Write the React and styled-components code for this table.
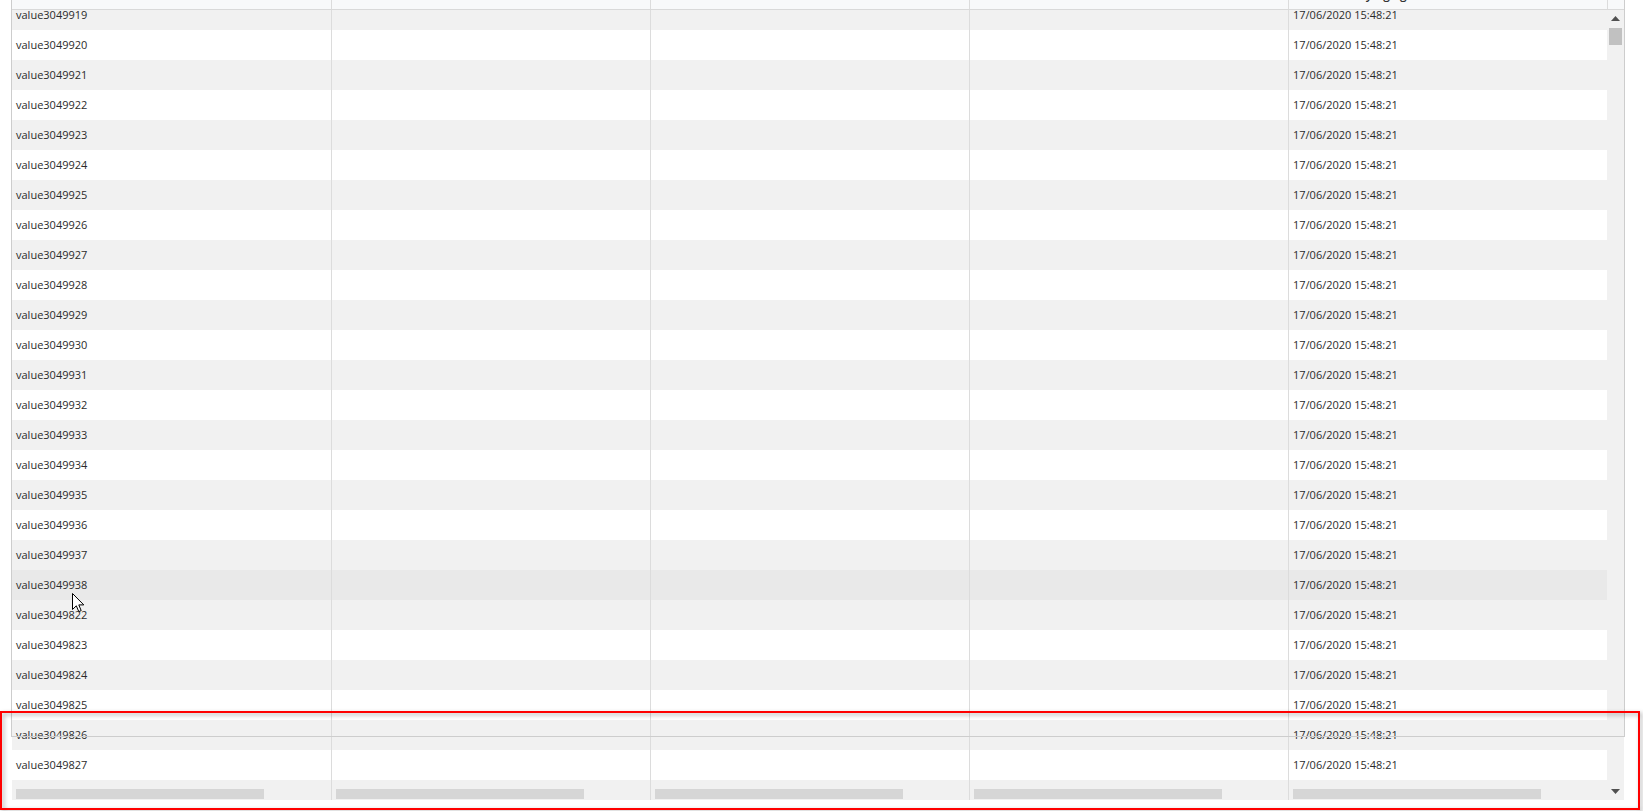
import styled, { createGlobalStyle } from 'styled-components'

const GlobalStyle = createGlobalStyle`
    html, body {
        margin: 0;
        padding: 0;
        background: #ffffff;
        overflow: hidden;
    }
    body {
        font-family: "Open Sans", "Noto Sans", Arial, sans-serif;
    }
`

const COLS = '320px 319px 319px 319px 318px'

// rows as they sit in the grid (the second block got appended after the hovered one)
const rows = [
    ...Array.from({ length: 20 }, (_, i) => `value${3049919 + i}`),
    ...Array.from({ length: 6 }, (_, i) => `value${3049822 + i}`),
]
const HOVERED = 'value3049938'
const STAMP = '17/06/2020 15:48:21'

function App() {
    return (
        <Page>
            <GlobalStyle />
            <Frame>
                <Header>
                    <HeadCell />
                    <HeadCell />
                    <HeadCell />
                    <HeadCell />
                    <HeadCell>Latest modifying agent</HeadCell>
                    <HeadCell />
                </Header>
                <Body>
                    <RowList>
                        {rows.map((name, i) => (
                            <Row key={name} $striped={i % 2 === 0} $hover={name === HOVERED}>
                                <Cell>{name}</Cell>
                                <Cell />
                                <Cell />
                                <Cell />
                                <Cell $last>{STAMP}</Cell>
                            </Row>
                        ))}
                        <Row $striped>
                            {[0, 1, 2, 3, 4].map(c => (
                                <Cell key={c} $last={c === 4}>
                                    <Skeleton />
                                </Cell>
                            ))}
                        </Row>
                    </RowList>
                    <Scrollbar>
                        <ArrowButton>
                            <svg width="9" height="5" viewBox="0 0 9 5">
                                <polygon points="0,5 9,5 4.5,0" fill="#505050" />
                            </svg>
                        </ArrowButton>
                        <Thumb />
                        <Track />
                        <ArrowButton>
                            <svg width="9" height="5" viewBox="0 0 9 5">
                                <polygon points="0,0 9,0 4.5,5" fill="#505050" />
                            </svg>
                        </ArrowButton>
                    </Scrollbar>
                </Body>
            </Frame>
            <Cursor width="13" height="20" viewBox="0 0 13 20">
                <path d="M0.5 0.5 L0.5 16.5 L4.3 12.8 L6.8 18.6 L9.2 17.6 L6.8 11.9 L11.8 11.9 Z" fill="#ffffff" stroke="#000000" strokeWidth="1" strokeLinejoin="miter" />
            </Cursor>
            <Highlight />
        </Page>
    )
}

export default App

const Page = styled.div`
    position: relative;
    width: 1643px;
    height: 811px;
    overflow: hidden;
    background: #ffffff;
`

const Frame = styled.div`
    position: relative;
    display: flex;
    flex-direction: column;
    margin-left: 11px;
    width: 1614px;
    padding: 0 1px;
    box-sizing: border-box;

    &::after {
        content: '';
        position: absolute;
        left: 0;
        right: 0;
        top: -1px;
        height: 738px;
        box-sizing: border-box;
        border: 1px solid #cdcdcd;
        pointer-events: none;
        z-index: 3;
    }
`

const Header = styled.div`
    position: relative;
    z-index: 1;
    display: grid;
    grid-template-columns: 320px 319px 319px 319px 319px 16px;
    height: 33px;
    margin-top: -23px;
    box-sizing: border-box;
    background: #f8f9fa;
    border-bottom: 1px solid #d9d9d9;
`

const HeadCell = styled.div`
    box-sizing: border-box;
    padding: 10px 0 0 4px;
    font-size: 12px;
    line-height: 16px;
    font-weight: 600;
    color: #333333;
    white-space: nowrap;
    overflow: hidden;
    border-right: 1px solid #dcdcdc;

    &:last-child {
        border-right: none;
    }
`

const Body = styled.div`
    display: flex;
    height: 800px;
    margin-top: -10px;
    overflow: hidden;
`

const RowList = styled.div`
    display: flex;
    flex-direction: column;
    width: 1595px;
`

const Row = styled.div`
    display: grid;
    grid-template-columns: ${COLS};
    height: 30px;
    flex-shrink: 0;
    background: ${p => (p.$hover ? '#e9e9e9' : p.$striped ? '#f1f1f1' : '#ffffff')};
`

const Cell = styled.div`
    box-sizing: border-box;
    padding-left: 4px;
    font-size: 11px;
    line-height: 30px;
    color: #2b2b2b;
    white-space: nowrap;
    overflow: hidden;
    border-right: ${p => (p.$last ? 'none' : '1px solid #dcdcdc')};
`

const Skeleton = styled.div`
    width: 248px;
    height: 10px;
    margin-top: 9px;
    background: #d6d6d6;
`

const Scrollbar = styled.div`
    display: flex;
    flex-direction: column;
    width: 17px;
    padding-top: 10px;
    box-sizing: border-box;
    background: #f1f1f1;
`

const ArrowButton = styled.div`
    display: flex;
    align-items: center;
    justify-content: center;
    height: 17px;
    flex-shrink: 0;
`

const Thumb = styled.div`
    height: 17px;
    margin: 1px 2px 0;
    background: #c1c1c1;
    flex-shrink: 0;
`

const Track = styled.div`
    flex: 1;
`

const Cursor = styled.svg`
    position: absolute;
    left: 72px;
    top: 593px;
    z-index: 5;
`

const Highlight = styled.div`
    position: absolute;
    left: 0;
    top: 711px;
    width: 1640px;
    height: 99px;
    box-sizing: border-box;
    border: 2px solid #ff0000;
    filter: drop-shadow(2px 2px 2px rgba(0, 0, 0, 0.35));
    z-index: 4;
    pointer-events: none;
`
